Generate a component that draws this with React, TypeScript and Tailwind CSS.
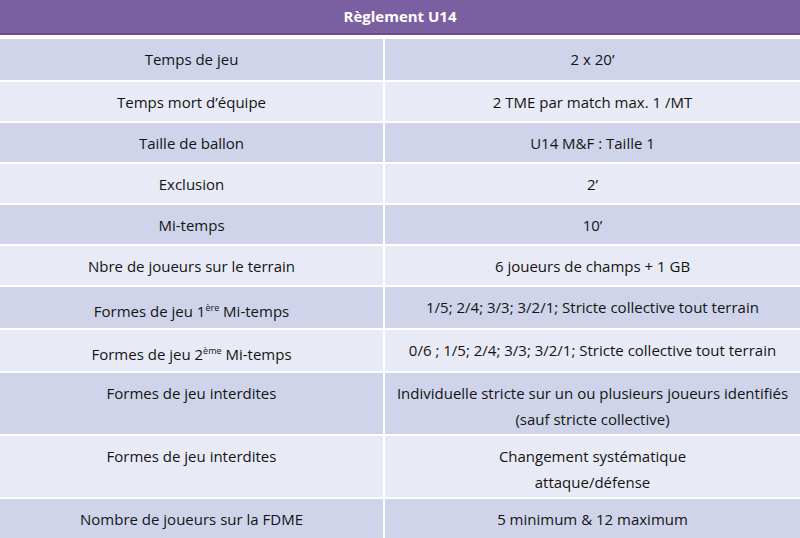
import React from "react";

type Row = { l: React.ReactNode; r: React.ReactNode; h: string; lp?: string };

const sup = (t: string) => (
  <sup className="text-[9px] relative -top-[6px] align-baseline">{t}</sup>
);

const rows: Row[] = [
  { l: "Temps de jeu", r: "2 x 20’", h: "h-[41px]" },
  { l: "Temps mort d’équipe", r: "2 TME par match max. 1 /MT", h: "h-[39px]" },
  { l: "Taille de ballon", r: "U14 M&F : Taille 1", h: "h-[39px]" },
  { l: "Exclusion", r: "2’", h: "h-[39px]" },
  { l: "Mi-temps", r: "10’", h: "h-[39px]" },
  { l: "Nbre de joueurs sur le terrain", r: "6 joueurs de champs + 1 GB", h: "h-[39px]" },
  {
    l: (
      <>
        Formes de jeu 1{sup("ère")} Mi-temps
      </>
    ),
    r: "1/5; 2/4; 3/3; 3/2/1; Stricte collective tout terrain",
    h: "h-[41px]",
    lp: "pt-[11px]",
  },
  {
    l: (
      <>
        Formes de jeu 2{sup("ème")} Mi-temps
      </>
    ),
    r: "0/6 ; 1/5; 2/4; 3/3; 3/2/1; Stricte collective tout terrain",
    h: "h-[41px]",
    lp: "pt-[11px]",
  },
  {
    l: "Formes de jeu interdites",
    r: (
      <>
        Individuelle stricte sur un ou plusieurs joueurs identifiés
        <br />
        (sauf stricte collective)
      </>
    ),
    h: "h-[61px]",
  },
  {
    l: "Formes de jeu interdites",
    r: (
      <>
        Changement systématique
        <br />
        attaque/défense
      </>
    ),
    h: "h-[61px]",
  },
  { l: "Nombre de joueurs sur la FDME", r: "5 minimum & 12 maximum", h: "h-[39px]" },
];

export default function App() {
  return (
    <div
      className="w-[800px] h-[538px] overflow-hidden bg-white text-[#141414]"
      style={{ fontFamily: '"Open Sans", "Noto Sans", sans-serif' }}
    >
      <div className="h-[35px] bg-[#7b60a1] border-b-2 border-[#6a4e92] flex items-center justify-center text-white font-bold text-[15px]">
        Règlement U14
      </div>
      <div className="mt-[4px] grid grid-cols-[383px_415px] gap-x-[2px] gap-y-[2px]">
        {rows.map((row, i) => {
          const bg = i % 2 === 0 ? "bg-[#cfd4ea]" : "bg-[#e8ebf5]";
          return (
            <React.Fragment key={i}>
              <div className={`${bg} ${row.h} ${row.lp ?? "pt-[7px]"} text-center text-[15px] leading-[26px]`}>
                {row.l}
              </div>
              <div className={`${bg} ${row.h} pt-[7px] text-center text-[15px] leading-[26px]`}>
                {row.r}
              </div>
            </React.Fragment>
          );
        })}
      </div>
    </div>
  );
}
